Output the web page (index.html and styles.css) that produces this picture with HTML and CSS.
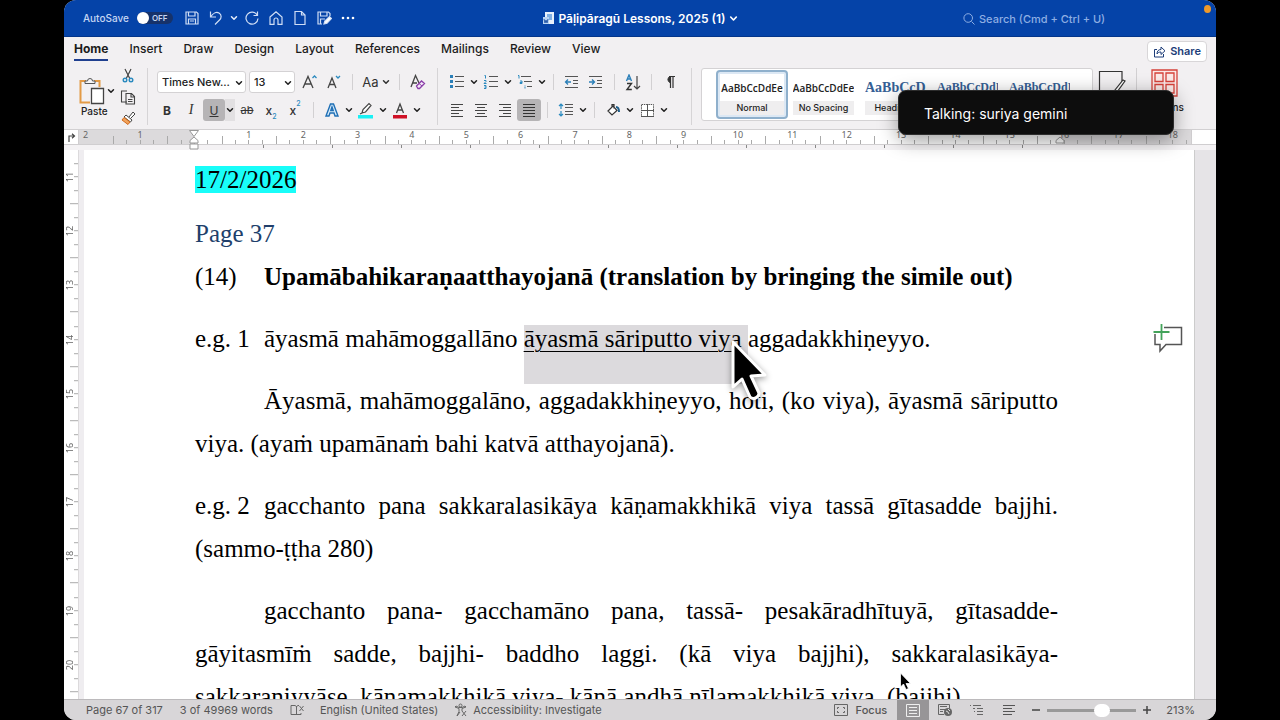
FILE: index.html
```html
<!DOCTYPE html>
<html lang="en">
<head>
<meta charset="utf-8">
<title>Pāḷipāragū Lessons, 2025 (1)</title>
<link rel="stylesheet" href="styles.css">
</head>
<body>
<svg class="defs" aria-hidden="true">
  <symbol id="chev" viewBox="0 0 8 8"><path d="M1.5 2.7 4 5.3l2.5-2.6" fill="none" stroke="currentColor" stroke-width="1.5" stroke-linecap="round" stroke-linejoin="round"/></symbol>
</svg>
<div class="window">
  <header class="titlebar">
    <div class="quick">
      <label class="autosave">AutoSave <input type="checkbox" class="toggle-input"><span class="toggle"><span class="knob"></span>OFF</span></label>
      <button class="qbtn" aria-label="Save"><svg width="16" height="16" viewBox="0 0 16 16"><path d="M2 2h10.500l1.500 1.500V14H2zM4.500 2v4h6.500V2M4.500 14V9h7v5M6 11h4" /></svg></button>
      <button class="qbtn undo" aria-label="Undo"><svg width="16" height="16" viewBox="0 0 16 16"><path d="M2.500 1.500v5.500h5.500M2.500 7C5 3 8.500 1.500 11 3c3 1.800 2.500 5 .5 7L7 14.500"/></svg></button>
      <button class="qarrow" aria-label="Undo options"><svg width="8" height="8"><use href="#chev"/></svg></button>
      <button class="qbtn" aria-label="Repeat"><svg width="16" height="16" viewBox="0 0 16 16"><path d="M13.500 1.500v4h-4M13.300 5.300A6 6 0 1 0 14 8.500"/></svg></button>
      <button class="qbtn" aria-label="Home"><svg width="16" height="16" viewBox="0 0 16 16"><path d="M2 7 8 1.700 14 7v7.300h-4V10a2 2 0 0 0-4 0v4.300H2z"/></svg></button>
      <button class="qbtn" aria-label="New"><svg width="16" height="16" viewBox="0 0 16 16"><path d="M3 1.500h6.500L13 5v9.500H3zM9.500 1.500V5H13"/></svg></button>
      <button class="qbtn" aria-label="Save as"><svg width="16" height="16" viewBox="0 0 16 16"><path d="M6 14H2V2h10.500L14 3.500V6M4.500 2v4h6.500V2M4.500 14V9H9"/><path d="m8 14 .8-3L13.500 6.500l2 2L11 13.200z" fill="#fff"/></svg></button>
      <button class="qbtn" aria-label="More"><svg width="16" height="16" viewBox="0 0 16 16"><g fill="#fff" stroke="none"><circle cx="3" cy="8" r="1.300"/><circle cx="8" cy="8" r="1.300"/><circle cx="13" cy="8" r="1.300"/></g></svg></button>
    </div>
    <button class="doc-title"><svg width="13" height="14" viewBox="0 0 13 14"><path d="M3 1h9v12H3z" fill="#e8f1fb"/><path d="M5 3h5v6H5z" fill="#7fb0e4"/><path d="M1 6h6v7H1z" fill="#b9d4f3"/><path d="m2 8 1 4 1-3 1 3 1-4" fill="none" stroke="#2a5caa"/></svg>Pāḷipāragū Lessons, 2025 (1)<svg width="9" height="9"><use href="#chev"/></svg></button>
    <label class="search"><svg width="12" height="12" viewBox="0 0 12 12"><path d="M8.500 8.500 11.500 11.500M9.500 5a4.300 4.300 0 1 1-8.600 0 4.300 4.300 0 0 1 8.600 0z" fill="none" stroke="currentColor"/></svg><input type="text" placeholder="Search (Cmd + Ctrl + U)" aria-label="Search"></label>
    <span class="mic-dot"></span>
  </header>

  <nav class="tabs">
    <button class="tab active">Home</button><button class="tab">Insert</button><button class="tab">Draw</button><button class="tab">Design</button><button class="tab">Layout</button><button class="tab">References</button><button class="tab">Mailings</button><button class="tab">Review</button><button class="tab">View</button>
    <button class="share"><svg width="13" height="13" viewBox="0 0 13 13"><path d="M4 4.500H1.500V12h9V9M4 9c0-3 1.500-4.500 4-4.500V2l4 3.800-4 3.700V7C6 7 5 7.500 4 9z" fill="none" stroke="currentColor" stroke-linejoin="round"/></svg>Share</button>
  </nav>

  <div class="ribbon">
    <section class="group clipboard">
      <button class="paste"><span class="paste-icon"><svg width="26" height="28" viewBox="0 0 26 28"><path d="M7 4H1.500v21.500H11M15 4h5.500v6" fill="none" stroke="#e39a45" stroke-width="2"/><path d="M6 6.500V4h2.500a2.500 2.500 0 0 1 5 0H16v2.500z" fill="#f6f5f6" stroke="#555"/><path d="M12.500 11.500h12v15h-12z" fill="#fff" stroke="#444" stroke-width="1.300"/></svg><svg width="8" height="8"><use href="#chev"/></svg></span><span class="paste-label">Paste</span></button>
      <div class="clip-col">
        <button class="mini" aria-label="Cut"><svg width="14" height="15" viewBox="0 0 14 15"><path d="M4 1l5 10M10 1 5 11" fill="none" stroke="#444" stroke-width="1.200"/><g fill="none" stroke="#2b8abf" stroke-width="1.400"><circle cx="4" cy="12" r="1.800"/><circle cx="10" cy="12" r="1.800"/></g></svg></button>
        <button class="mini" aria-label="Copy"><svg width="16" height="15" viewBox="0 0 16 15"><path d="M7 12H1.500V1H7M6 3.500h5.500L14.500 6.500V14H6zM11 3.500V7h3.500M8 9.500h4.500M8 11.500h4.500" fill="none" stroke="#444" stroke-width="1.100"/></svg></button>
        <button class="mini" aria-label="Format painter"><svg width="15" height="14" viewBox="0 0 15 14"><path d="m8 6 4-5 2 2-4.500 4.500" fill="#fff" stroke="#444"/><path d="m5 4 6 5-1.500 2-6.500-5z" fill="#fff" stroke="#444"/><path d="M3 6.500 9 11l-2 2.500L1 9z" fill="#f2a35c" stroke="#d06b1d"/></svg></button>
      </div>
    </section>

    <section class="group font">
      <div class="row first-row">
        <span class="combo wide"><select aria-label="Font"><option>Times New...</option></select><svg width="8" height="8"><use href="#chev"/></svg></span>
        <span class="combo narrow"><select aria-label="Font size"><option>13</option></select><svg width="8" height="8"><use href="#chev"/></svg></span>
        <button class="tool" aria-label="Grow font"><svg width="18" height="16" viewBox="0 0 18 16"><path d="M2 14 7 2.500 12 14M3.800 10h6.400" fill="none" stroke="#444" stroke-width="1.300"/><path d="m11.500 4 2-2 2 2" fill="none" stroke="#2b8abf" stroke-width="1.300"/></svg></button>
        <button class="tool" aria-label="Shrink font"><svg width="18" height="16" viewBox="0 0 18 16"><path d="M3 14 7 4l4 10M4.300 10.500h5.400" fill="none" stroke="#444" stroke-width="1.300"/><path d="m11 2 2 2 2-2" fill="none" stroke="#2b8abf" stroke-width="1.300"/></svg></button>
        <i class="sep"></i>
        <button class="tool case">Aa<svg width="8" height="8"><use href="#chev"/></svg></button>
        <i class="sep"></i>
        <button class="tool" aria-label="Clear formatting"><svg width="18" height="16" viewBox="0 0 18 16"><path d="M2 13 6.500 1.500 10 9M3.500 9H8" fill="none" stroke="#444" stroke-width="1.300"/><path d="m7.500 12 5-5 3 2.500-5 5H9z" fill="#f3e6f7" stroke="#8a3ea8" stroke-width="1.300"/><path d="m10 9.500 3 2.500" stroke="#8a3ea8"/></svg></button>
      </div>
      <div class="row two">
        <button class="tool b">B</button><button class="tool i">I</button><button class="tool u on">U</button><button class="arrow light" aria-label="Underline options"><svg width="8" height="8"><use href="#chev"/></svg></button>
        <button class="tool s">ab</button><button class="tool x">x<sub>2</sub></button><button class="tool x">x<sup>2</sup></button>
        <i class="sep"></i>
        <button class="tool" aria-label="Text effects"><svg width="16" height="16" viewBox="0 0 16 16"><path d="M2 14 6.500 2h3L14 14h-3l-1-3H6l-1 3zM6.800 8.500h2.400L8 5z" fill="#d9ecfa" stroke="#1f6fb5" stroke-width="1.400"/></svg></button><button class="arrow" aria-label="Text effect options"><svg width="8" height="8"><use href="#chev"/></svg></button>
        <button class="tool" aria-label="Highlight"><svg width="18" height="18" viewBox="0 0 18 18"><path d="m5 12 1-3.500L12 2.500l2 2L8.500 11 5 12zM5 12l-2 1" fill="#fff" stroke="#444" stroke-width="1.200"/><path d="M1 14h15v3.500H1z" fill="#19f0f4"/></svg></button><button class="arrow" aria-label="Highlight options"><svg width="8" height="8"><use href="#chev"/></svg></button>
        <button class="tool" aria-label="Font colour"><svg width="16" height="18" viewBox="0 0 16 18"><path d="M4.500 12 8 3l3.500 9M5.600 9h4.800" fill="none" stroke="#444" stroke-width="1.300"/><path d="M1 14h14v3.500H1z" fill="#cf1126"/></svg></button><button class="arrow" aria-label="Font colour options"><svg width="8" height="8"><use href="#chev"/></svg></button>
      </div>
    </section>

    <section class="group para">
      <div class="row">
        <button class="tool" aria-label="Bullets"><svg width="16" height="16" viewBox="0 0 16 16"><path d="M6 2.500h9M6 7.500h9M6 12.500h9" stroke="#555"/><path d="M1 1h3v3H1zM1 6h3v3H1zM1 11h3v3H1z" fill="#2b7fb8"/></svg></button><button class="arrow" aria-label="Bullet options"><svg width="8" height="8"><use href="#chev"/></svg></button>
        <button class="tool" aria-label="Numbering"><svg width="16" height="16" viewBox="0 0 16 16"><path d="M6 2.500h9M6 7.500h9M6 12.500h9" stroke="#555"/><path d="M1.500 1.500h1V4.500M1 6.500h2v1L1 9.500h2.500M1 11.500h2v3H1M1.500 13H3" fill="none" stroke="#2b8abf"/></svg></button><button class="arrow" aria-label="Numbering options"><svg width="8" height="8"><use href="#chev"/></svg></button>
        <button class="tool" aria-label="Multilevel list"><svg width="16" height="16" viewBox="0 0 16 16"><path d="M4 2.500h10M7 7.500h8M10 12.500h5" stroke="#555"/><path d="M1 1.500h1V4.500M3 7h2v2.500H3V8.500h2M8 11v.5M8 12.500v2" fill="none" stroke="#2b8abf"/></svg></button><button class="arrow" aria-label="Multilevel options"><svg width="8" height="8"><use href="#chev"/></svg></button>
        <i class="sep"></i>
        <button class="tool" aria-label="Decrease indent"><svg width="16" height="16" viewBox="0 0 16 16"><path d="M1 2.500h13M9 6.500h5M9 9.500h5M1 13.500h13" stroke="#555"/><path d="M7 8H1.500M4 5.500 1.500 8 4 10.500" fill="none" stroke="#2b7fb8" stroke-width="1.300"/></svg></button>
        <button class="tool" aria-label="Increase indent"><svg width="16" height="16" viewBox="0 0 16 16"><path d="M1 2.500h13M9 6.500h5M9 9.500h5M1 13.500h13" stroke="#555"/><path d="M1 8h5.500M4 5.500 6.500 8 4 10.500" fill="none" stroke="#2b7fb8" stroke-width="1.300"/></svg></button>
        <i class="sep"></i>
        <button class="tool" aria-label="Sort"><svg width="16" height="17" viewBox="0 0 16 17"><path d="m1.500 7 2.500-6 2.500 6M2.500 5h3" fill="none" stroke="#2b7fb8" stroke-width="1.400"/><path d="M2 9.500h4.500L2 15.500h4.800" fill="none" stroke="#333" stroke-width="1.400"/><path d="M12 2v13M9 12l3 3 3-3" fill="none" stroke="#444" stroke-width="1.200"/></svg></button>
        <i class="sep"></i>
        <button class="tool" aria-label="Show marks"><svg width="12" height="14" viewBox="0 0 12 14"><path d="M6 7.500a3.200 3.200 0 0 1 0-6z" fill="#333" stroke="#333"/><path d="M6.500 13V1.500M9 13V1.500M5 1.500h6" stroke="#333" stroke-width="1.200"/></svg></button>
      </div>
      <div class="row two">
        <button class="tool" aria-label="Align left"><svg width="14" height="14" viewBox="0 0 14 14"><path d="M1 1.500h12M1 4.500h8M1 7.500h12M1 10.500h8M1 13.500h12" stroke="#444"/></svg></button>
        <button class="tool" aria-label="Centre"><svg width="14" height="14" viewBox="0 0 14 14"><path d="M1 1.500h12M3 4.500h8M1 7.500h12M3 10.500h8M1 13.500h12" stroke="#444"/></svg></button>
        <button class="tool" aria-label="Align right"><svg width="14" height="14" viewBox="0 0 14 14"><path d="M1 1.500h12M5 4.500h8M1 7.500h12M5 10.500h8M1 13.500h12" stroke="#444"/></svg></button>
        <button class="tool on" aria-label="Justify"><svg width="14" height="14" viewBox="0 0 14 14"><path d="M1 1.500h12M1 4.500h12M1 7.500h12M1 10.500h12M1 13.500h12" stroke="#333"/></svg></button>
        <i class="sep"></i>
        <button class="tool" aria-label="Line spacing"><svg width="16" height="16" viewBox="0 0 16 16"><path d="M7 2.500h8M7 5.500h8M7 9.500h8M7 12.500h8" stroke="#555"/><path d="M3 7V2M1 4l2-2 2 2M3 9v5M1 12l2 2 2-2" fill="none" stroke="#2b8abf" stroke-width="1.200"/></svg></button><button class="arrow" aria-label="Spacing options"><svg width="8" height="8"><use href="#chev"/></svg></button>
        <i class="sep"></i>
        <button class="tool" aria-label="Shading"><svg width="15" height="14" viewBox="0 0 15 14"><path d="m2 8 5-5 4 4.500-5 4.500zM6 4.500V1.500h2v4" fill="#fff" stroke="#333" stroke-width="1.200"/><path d="M10 4c2 0 3 2 3 5" fill="none" stroke="#1f5f8b" stroke-width="2"/></svg></button><button class="arrow" aria-label="Shading options"><svg width="8" height="8"><use href="#chev"/></svg></button>
        <button class="tool" aria-label="Borders"><svg width="15" height="15" viewBox="0 0 15 15"><path d="M1.500 1.500h12v12h-12z" fill="#fff" stroke="#555" stroke-dasharray="1.500 .8"/><path d="M7.500 1v13M1 7.500h13M1 13.500h13" stroke="#555"/></svg></button><button class="arrow" aria-label="Border options"><svg width="8" height="8"><use href="#chev"/></svg></button>
      </div>
    </section>

    <section class="group styles">
      <div class="gallery">
        <button class="style picked"><span class="sample">AaBbCcDdEe</span><span class="name">Normal</span></button>
        <button class="style"><span class="sample">AaBbCcDdEe</span><span class="name">No Spacing</span></button>
        <button class="style"><span class="sample h1">AaBbCcD</span><span class="name">Heading 1</span></button>
        <button class="style"><span class="sample h2">AaBbCcDdE</span><span class="name">Heading 2</span></button>
        <button class="style"><span class="sample h3">AaBbCcDdEe</span><span class="name">Heading 3</span></button>
      </div>
      <button class="pane-btn" aria-label="Styles Pane"><svg width="28" height="28" viewBox="0 0 28 28"><path d="M24 12V1.500H1.500V27H10" fill="none" stroke="#333" stroke-width="1.200"/><path d="m25 10 2 1-8 11-3 2 1-4z" fill="#fff" stroke="#333" stroke-width="1.200"/></svg></button>
      <i class="sep tall"></i>
      <button class="addins"><svg width="27" height="28" viewBox="0 0 27 28"><path d="M1 1h25v26H1zM4 4h8v8.500H4zM15 4h8v8.500h-8zM4 15.500h8V24H4zM15 15.500h8V24h-8z" fill="#fbe9e7" stroke="#d5423a" stroke-width="1.300"/></svg>Add-ins</button>
    </section>
  </div>

  <div class="ruler">
    <span class="tab-kind"><svg width="9" height="9" viewBox="0 0 9 9"><path d="M2 9V3h5M5 .8 7.500 3 5 5.200" fill="none" stroke="#444" stroke-width="1.200"/></svg></span>
    <div class="scale">
      <span class="first">2</span><div class="cells"><span>1</span><span></span><span>1</span><span>2</span><span>3</span><span>4</span><span>5</span><span>6</span><span>7</span><span>8</span><span>9</span><span>10</span><span>11</span><span>12</span><span>13</span><span>14</span><span>15</span><span>16</span><span>17</span><span>18</span></div>
      <svg class="indent-left" width="10" height="20" viewBox="0 0 10 20"><path d="M.5.5h9L5 6.500zM5 7l4 3.500V13H1v-2.500zM1 14h8v5H1z" fill="#fff" stroke="#999"/></svg>
      <svg class="indent-right" width="10" height="8" viewBox="0 0 10 8"><path d="m5 1 4 3.500V7H1V4.500z" fill="#fff" stroke="#999"/></svg>
    </div>
    <span class="end"></span>
  </div>
  <div class="tabstops"><i></i></div>

  <main class="body">
    <div class="vruler"><span>11</span><span>12</span><span>13</span><span>14</span><span>15</span><span>16</span><span>17</span><span>18</span><span>19</span><span>20</span></div>
    <article class="page">
      <p class="date"><mark class="cyan">17/2/2026</mark></p>
      <h2 class="pageno">Page 37</h2>
      <p class="head"><span class="lead">(14)</span><b>Upamābahikaraṇaatthayojanā (translation by bringing the simile out)</b></p>
      <p><span class="lead">e.g. 1</span>āyasmā mahāmoggallāno <mark class="sel"><u>āyasmā sāriputto viya</u> </mark>aggadakkhiṇeyyo.</p>
      <p class="indented">Āyasmā, mahāmoggalāno, aggadakkhiṇeyyo, hoti, (ko viya), āyasmā sāriputto viya. (ayaṁ upamānaṁ bahi katvā atthayojanā).</p>
      <p><span class="lead">e.g. 2</span>gacchanto pana sakkaralasikāya kāṇamakkhikā viya tassā gītasadde bajjhi. (sammo-ṭṭha 280)</p>
      <p class="indented">gacchanto pana- gacchamāno pana, tassā- pesakāradhītuyā, gītasadde- gāyitasmīṁ sadde, bajjhi- baddho laggi. (kā viya bajjhi), sakkaralasikāya- sakkaraniyyāse, kāṇamakkhikā viya- kāṇā andhā nīlamakkhikā viya, (bajjhi).</p>
      <button class="comment" aria-label="New comment"><svg width="30" height="30" viewBox="0 0 30 30"><path d="M11 4.500h17.500v17H13L7 28v-6.500H2V11" fill="none" stroke="#555" stroke-width="1.500"/><path d="M8.500 1v16M.5 9h16" stroke="#43a35a" stroke-width="1.800"/></svg></button>
    </article>
  </main>

  <footer class="status">
    <span class="pages">Page 67 of 317</span><span class="words">3 of 49969 words</span>
    <svg class="proof" width="14" height="12" viewBox="0 0 14 12"><path d="M6.500 2v9M8 10.500H1v-9h4l1.500 1L8 1.500h1M9.500 2l4 5M13.500 2l-4 5M11 9v1.500H8" fill="none" stroke="#666"/></svg>
    <span class="lang">English (United States)</span>
    <svg class="access" width="14" height="14" viewBox="0 0 14 14"><path d="M8 2.500a1.500 1.500 0 1 1-3 0 1.500 1.500 0 0 1 3 0zM1 4l4 1.500v3L3 13M12 4 8 5.500V8M1 4l1-1 3 1.500h3L11 3l1 1M3 13l3-4M8 8l4 5M12 8l-4 5" fill="none" stroke="#666"/></svg>
    <span>Accessibility: Investigate</span>
    <div class="views">
      <button class="focus"><svg width="14" height="12" viewBox="0 0 14 12"><path d="M.5.500h13v11H.5zM3.500 5V3.500H5M9 3.500h1.500V5M10.500 7v1.500H9M5 8.500H3.500V7" fill="none" stroke="#666"/></svg>Focus</button>
      <button class="view on" aria-label="Print layout"><svg width="14" height="13" viewBox="0 0 14 13"><path d="M.5.500h13v12H.5zM3 3.500h8M3 6.500h8M3 9.500h8" fill="none" stroke="#eee"/></svg></button>
      <button class="view" aria-label="Web layout"><svg width="16" height="14" viewBox="0 0 16 14"><path d="M7 11.500H1.500V1.500h11v4M3 3.500h7M3 6.500h5M3 8.500h3" fill="none" stroke="#666"/><circle cx="11" cy="9" r="4" fill="#666"/><path d="m9 8 2 1 1 2M11 6l2 2" stroke="#ddd" fill="none"/></svg></button>
      <button class="view" aria-label="Outline"><svg width="14" height="12" viewBox="0 0 14 12"><path d="M3 1.500h8M7 4.500h6M4 7.500h1M7 7.500h6M7 10.500h6M0 1.500h1M3 4.500h2" fill="none" stroke="#666"/></svg></button>
      <button class="view" aria-label="Draft"><svg width="14" height="12" viewBox="0 0 14 12"><path d="M1 1.500h12M1 4.500h9M1 7.500h12M1 10.500h9" stroke="#555"/></svg></button>
      <button class="step" aria-label="Zoom out"><svg width="8" height="8"><path d="M0 4h8" stroke="#444" stroke-width="1.500"/></svg></button>
      <input class="zoom" type="range" min="0" max="100" value="64" aria-label="Zoom">
      <button class="step" aria-label="Zoom in"><svg width="8" height="8"><path d="M0 4h8M4 0v8" stroke="#444" stroke-width="1.500"/></svg></button>
      <span class="pct">213%</span>
    </div>
  </footer>
</div>

<div class="toast">Talking: suriya gemini</div>
<svg class="cursor-big" width="42" height="66" viewBox="0 0 42 66"><path d="M4 4v45l9-8 8 18c3 3 9 1 9-4l-8-17 14-1z" fill="#000" stroke="#fff" stroke-width="3" stroke-linejoin="round"/></svg>
<svg class="cursor-small" width="14" height="20" viewBox="0 0 14 20"><path d="M1.500 1v14l3-3 2.500 5.500 2.500-1L7 11.500h4.500z" fill="#000" stroke="#fff" stroke-width=".8"/></svg>
</body>
</html>
```
FILE: styles.css
```css
* { box-sizing: border-box; }
body { margin: 0; background: #000; font-family: Inter, "Liberation Sans", sans-serif; font-size: 11px; color: #222; }
button, input, select { font: inherit; color: inherit; border: 0; background: none; padding: 0; margin: 0; }
.defs { position: absolute; width: 0; height: 0; }
svg { display: block; flex: none; }
.window { margin: 0 64px; height: 100vh; display: flex; flex-direction: column; background: #f2f0f2; border-radius: 12px; overflow: hidden; }

.titlebar { position: relative; flex: none; height: 37px; background: #0543a8; border-bottom: 1px solid #03358a; color: #e4ecfa; display: grid; grid-template-columns: 1fr auto 1fr; align-items: center; }
.quick { display: flex; align-items: center; padding-left: 19px; }
.autosave { display: flex; align-items: center; gap: 8px; font-size: 10px; font-weight: 500; color: #c5d6f3; margin-right: 7px; }
.toggle-input { position: absolute; opacity: 0; }
.toggle { display: flex; align-items: center; gap: 3px; width: 36px; height: 12px; border-radius: 6px; background: #16326a; font-size: 8px; font-weight: 600; }
.knob { width: 12px; height: 12px; border-radius: 50%; background: #fff; }
.qbtn { width: 24px; display: flex; justify-content: center; }
.qbtn svg { fill: none; stroke: #d0def5; stroke-width: 1.2; }
.qarrow { width: 12px; display: flex; justify-content: center; }
.doc-title { display: flex; align-items: center; gap: 3px; font-size: 12px; font-weight: 600; color: #fff; }
.search { justify-self: end; display: flex; align-items: center; gap: 4px; margin-right: 93px; padding-top: 2px; color: #8eaee3; }
.search input { width: 144px; font-weight: 500; }
.search input::placeholder { color: #8eaee3; opacity: 1; }
.mic-dot { position: absolute; right: 5px; top: 5px; width: 7px; height: 8px; border-radius: 50%; background: #f09a2a; }

.tabs { flex: none; display: flex; align-items: center; gap: 21px; height: 27px; padding: 0 9px 3px 10px; font-size: 12px; }
.tab { height: 24px; font-weight: 500; color: #1c1c1c; border-bottom: 2px solid transparent; }
.tab.active { font-weight: 700; border-color: #1f3f8f; }
.share { margin-left: auto; display: flex; align-items: center; gap: 4px; height: 21px; padding: 0 5px; margin-top: 4px; background: #fff; border: 1px solid #d8d6d8; border-radius: 4px; font-size: 11px; font-weight: 600; color: #1d3d78; }

.ribbon { flex: none; display: flex; height: 66px; border-bottom: 1px solid #d2d0d2; }
.group { margin: 4px 0; border-right: 1px solid #d6d4d6; }
.clipboard { display: flex; width: 84px; padding-left: 15px; }
.paste { width: 36px; display: flex; flex-direction: column; justify-content: center; font-size: 10px; font-weight: 500; text-align: left; }
.paste-icon { display: flex; align-items: center; gap: 2px; }
.paste-label { padding-left: 2px; }
.clip-col { display: flex; flex-direction: column; justify-content: space-between; padding-left: 5px; }
.mini { width: 16px; display: flex; justify-content: center; }
.font { width: 290px; padding-left: 7px; }
.para { width: 254px; padding-left: 7px; }
.row { display: flex; align-items: center; height: 28px; }
.first-row { padding-left: 2px; }
.combo { position: relative; height: 22px; margin-right: 3px; background: #fff; border: 1px solid #d4d2d4; border-radius: 3px; }
.combo select { appearance: none; width: 100%; height: 100%; padding: 0 4px; font-weight: 500; }
.combo svg { position: absolute; right: 2px; top: 7px; pointer-events: none; }
.wide { width: 89px; }
.narrow { width: 46px; }
.tool { flex: none; width: 24px; height: 22px; display: flex; align-items: center; justify-content: center; border-radius: 3px; font-size: 12px; color: #333; }
.arrow { flex: none; width: 10px; height: 22px; display: flex; align-items: center; justify-content: center; }
.light { background: #e2e0e2; }
.on { background: #b6b4b6; }
.sep { flex: none; width: 13px; height: 16px; background: linear-gradient(#d2d0d2, #d2d0d2) center / 1px 100% no-repeat; }
.case { width: 34px; gap: 3px; font-size: 13px; }
.b { font-weight: 700; }
.i { font-family: "Liberation Serif", serif; font-style: italic; font-size: 14px; }
.u { width: 22px; text-decoration: underline; }
.s { text-decoration: line-through; font-size: 11px; }
.x { font-weight: 500; }
.x sub, .x sup { font-size: 7px; color: #2b8abf; }
.x sub { align-self: flex-end; }
.x sup { align-self: flex-start; }

.styles { flex: 1; display: flex; border: 0; padding-left: 9px; min-width: 0; }
.gallery { flex: none; display: flex; gap: 5px; width: 392px; height: 53px; padding: 1px 14px; background: #fff; border: 1px solid #d4d2d4; border-radius: 3px; }
.style { flex: none; width: 67px; height: 49px; padding: 3px 2px; display: flex; flex-direction: column; border: 1px solid transparent; overflow: hidden; }
.picked { width: 72px; margin-right: -3px; padding: 2px; border: 2px solid #8fb0cc; border-radius: 4px; background: #dce8f4; }
.sample { flex: 1; display: flex; align-items: center; justify-content: center; width: 100%; background: #fff; font: 600 10px "Open Sans", sans-serif; white-space: nowrap; overflow: hidden; }
.name { width: 100%; background: #efeeef; font-size: 9px; font-weight: 500; line-height: 14px; }
.h1, .h2, .h3 { font-family: "Liberation Serif", serif; color: #355f95; justify-content: flex-start; }
.h1 { font-size: 14px; }
.h2, .h3 { font-size: 12px; }
.pane-btn { margin-left: 5px; align-self: flex-start; padding-top: 2px; }
.tall { height: 50px; margin-left: 4px; }
.addins { display: flex; flex-direction: column; align-items: center; gap: 4px; margin-left: 3px; padding-top: 1px; align-self: flex-start; font-size: 10px; font-weight: 500; }

.ruler { flex: none; display: flex; height: 15px; background: #fff; border-bottom: 1px solid #d0ced0; }
.tab-kind { flex: none; width: 15px; display: flex; align-items: center; justify-content: center; border-right: 1px solid #d0ced0; }
.scale { position: relative; flex: 1; display: flex; background: linear-gradient(90deg, #dcdadc 115px, #fff 115px, #fff calc(100% - 129px), #dcdadc calc(100% - 129px)); font: 9px "Noto Sans", sans-serif; color: #666; }
.first { flex: none; width: 34px; padding-left: 4px; line-height: 9px; }
.cells { flex: 1; display: grid; grid-template-columns: repeat(20, 1fr); margin-right: -9px; }
.cells span { text-align: center; line-height: 9px; background: linear-gradient(#aaa, #aaa) 25% 100% / 1px 4px no-repeat, linear-gradient(#aaa, #aaa) 50% 100% / 1px 4px no-repeat, linear-gradient(#aaa, #aaa) 75% 100% / 1px 4px no-repeat, linear-gradient(#aaa, #aaa) 0 100% / 1px 8px no-repeat; }
.indent-left { position: absolute; left: 110px; top: 0; z-index: 1; }
.indent-right { position: absolute; right: 126px; bottom: 0; }
.end { flex: none; width: 25px; border-left: 1px solid #d0ced0; }
.tabstops { flex: none; height: 5px; padding: 0 180px 0 199px; background: #f4f2f4; }
.tabstops i { display: block; height: 3px; background: repeating-linear-gradient(90deg, #888 0 1px, transparent 1px 69px); }

.body { flex: 1; min-height: 0; display: flex; padding-right: 21px; background: #e6e4e7; overflow: hidden; }
.vruler { flex: none; width: 20px; display: grid; grid-template-rows: repeat(10, 1fr); padding-bottom: 7px; background: linear-gradient(90deg, #fff 14px, #dcdadc 14px, #dcdadc 15px, #efedf0 15px); font: 9px "Noto Sans", sans-serif; color: #666; }
.vruler span { width: 14px; display: flex; align-items: center; justify-content: center; writing-mode: vertical-rl; transform: rotate(180deg); padding-left: 4px; background: linear-gradient(#aaa, #aaa) 0 25% / 4px 1px no-repeat, linear-gradient(#aaa, #aaa) 0 50% / 4px 1px no-repeat, linear-gradient(#aaa, #aaa) 0 75% / 4px 1px no-repeat, linear-gradient(#aaa, #aaa) 0 0 / 8px 1px no-repeat; }
.page { position: relative; flex: 1; padding: 8px 136px 0 111px; background: #fff; border-right: 1px solid #ccc; font: 25px/43px "Liberation Serif", serif; color: #000; text-align: justify; overflow: hidden; }
.page p, .page h2 { margin: 0 0 19px; }
.page .date { margin-bottom: 11px; }
.page .pageno { margin: 0; font: inherit; color: #213f6b; }
.indented { text-indent: 69px; }
.lead { display: inline-block; width: 69px; }
mark { color: inherit; background: none; }
.cyan { background: #19fdf9; }
.sel { background: #dcdadd; padding-bottom: 32px; }
u { text-decoration-thickness: 1px; text-underline-offset: 4px; }
.comment { position: absolute; right: 11px; top: 173px; }

.status { flex: none; height: 21px; display: flex; align-items: center; padding-left: 22px; background: #d8d6d8; border-top: 1px solid #bcbabc; color: #555; font-size: 11px; }
.words { margin: 0 17px; }
.lang { margin: 0 16px; }
.access { margin-right: 5px; }
.views { margin-left: auto; display: flex; align-items: center; height: 100%; padding-right: 21px; }
.focus { display: flex; align-items: center; gap: 8px; margin-right: 10px; font-weight: 500; }
.view { width: 32px; height: 100%; display: flex; align-items: center; justify-content: center; }
.view.on { background: #979597; }
.step { width: 14px; display: flex; justify-content: center; margin-left: 4px; }
.zoom { appearance: none; width: 89px; height: 14px; margin: 0 0 0 4px; background: linear-gradient(#999, #999) center / 100% 3px no-repeat; }
.zoom::-webkit-slider-thumb { appearance: none; width: 16px; height: 13px; border-radius: 7px; background: #fff; }
.pct { margin-left: 12px; }

.toast { position: absolute; right: 106px; top: 90px; width: 276px; height: 45px; padding-left: 25px; line-height: 46px; background: #0d0d0d; border: 1px solid #2c2c2c; border-radius: 8px; box-shadow: 0 5px 20px rgba(0, 0, 0, .4); color: #fff; font-size: 14px; }
.cursor-big { position: absolute; left: 729px; top: 338px; filter: drop-shadow(0 2px 3px rgba(0, 0, 0, .4)); }
.cursor-small { position: absolute; left: 899px; top: 672px; }
```
